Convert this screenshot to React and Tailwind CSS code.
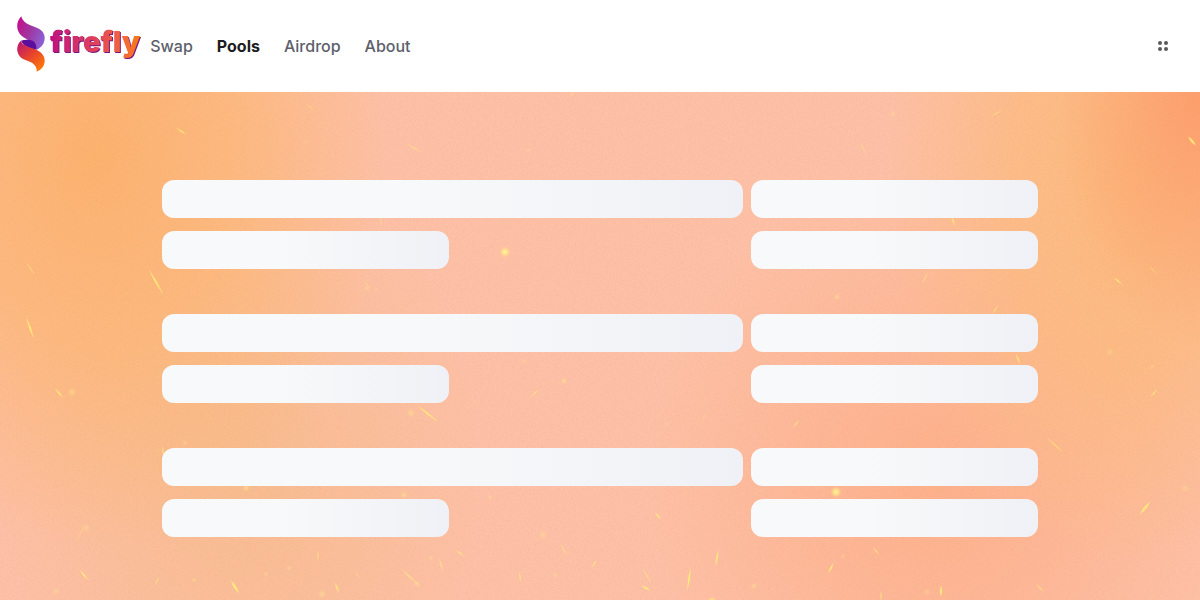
import React from 'react';

const NAV_LINKS = [
    { label: 'Swap', href: '#swap' },
    { label: 'Pools', href: '#pools', active: true },
    { label: 'Airdrop', href: '#airdrop' },
    { label: 'About', href: '#about' },
];

// [x, y, length, thickness, angle, opacity]
const SPARKS = [
    [181, 39, 10, 3, 35, 0.7],
    [310, 15, 9, 2, 40, 0.35],
    [414, 56, 15, 2, 30, 0.55],
    [381, 129, 9, 2, 85, 0.4],
    [863, 56, 12, 2, 62, 0.4],
    [997, 21, 11, 2, -28, 0.5],
    [1192, 49, 10, 4, 50, 0.9],
    [953, 129, 8, 3, 70, 0.8],
    [925, 186, 12, 2, -65, 0.5],
    [995, 218, 9, 2, -60, 0.6],
    [1118, 189, 9, 3, 40, 0.8],
    [1153, 178, 8, 2, 45, 0.4],
    [156, 190, 26, 3, 60, 0.9],
    [31, 177, 13, 2, 55, 0.5],
    [30, 236, 19, 3, 70, 0.95],
    [367, 192, 10, 2, 55, 0.35],
    [59, 301, 10, 3, 50, 0.85],
    [163, 359, 8, 2, 85, 0.7],
    [428, 322, 24, 3, 38, 0.9],
    [535, 301, 9, 2, -45, 0.65],
    [704, 325, 8, 1, -70, 0.4],
    [796, 332, 9, 2, -50, 0.65],
    [1018, 267, 9, 3, 70, 0.8],
    [1154, 301, 9, 2, -45, 0.8],
    [1055, 353, 20, 2, 42, 0.55],
    [1145, 416, 14, 4, -52, 0.9],
    [1152, 275, 6, 2, -45, 0.4],
    [80, 442, 16, 2, -65, 0.3],
    [84, 483, 11, 3, 50, 0.9],
    [157, 489, 7, 2, -60, 0.65],
    [235, 495, 13, 4, 58, 0.95],
    [318, 464, 8, 2, 90, 0.5],
    [337, 496, 9, 3, 70, 0.9],
    [357, 482, 10, 2, 55, 0.35],
    [441, 473, 11, 3, 75, 0.6],
    [410, 485, 20, 3, 42, 0.6],
    [460, 461, 9, 3, 35, 0.65],
    [520, 485, 9, 2, 80, 0.8],
    [564, 458, 13, 3, 55, 0.4],
    [594, 472, 7, 2, -60, 0.75],
    [658, 424, 7, 3, 50, 0.9],
    [689, 487, 21, 3, -82, 1],
    [717, 466, 15, 3, -80, 0.95],
    [647, 484, 15, 2, 58, 0.55],
    [646, 496, 9, 3, 30, 1],
    [876, 459, 9, 2, 45, 0.7],
    [831, 476, 10, 3, -65, 0.95],
    [941, 499, 9, 4, 90, 0.95],
    [881, 504, 7, 2, 90, 0.7],
    [1040, 496, 9, 2, 45, 0.8],
    [712, 507, 6, 3, 0, 0.7],
];

// [x, y, radius, opacity]
const GLOWS = [
    [505, 160, 6, 1],
    [836, 400, 6, 1],
    [837, 205, 4, 0.4],
    [893, 22, 4, 0.25],
    [528, 58, 3, 0.25],
    [306, 50, 3, 0.2],
    [367, 196, 4, 0.25],
    [376, 198, 3, 0.2],
    [72, 300, 5, 0.35],
    [564, 289, 4, 0.4],
    [411, 321, 5, 0.35],
    [667, 332, 3, 0.2],
    [524, 269, 3, 0.25],
    [185, 351, 3, 0.3],
    [246, 396, 4, 0.5],
    [404, 403, 4, 0.4],
    [490, 405, 3, 0.35],
    [543, 443, 5, 0.3],
    [1110, 260, 5, 0.25],
    [1185, 396, 5, 0.25],
    [86, 436, 5, 0.25],
    [56, 499, 5, 0.25],
    [289, 476, 3, 0.35],
    [266, 482, 3, 0.3],
    [194, 488, 3, 0.3],
    [322, 502, 5, 0.35],
    [431, 466, 3, 0.3],
    [417, 492, 4, 0.35],
    [555, 483, 3, 0.3],
    [754, 494, 4, 0.35],
    [927, 500, 4, 0.25],
    [843, 464, 3, 0.25],
    [572, 2, 3, 0.3],
];

function LogoMark() {
    return (
        <svg viewBox="0 0 84 168" className="h-14 w-7 shrink-0" aria-hidden="true">
            <defs>
                <linearGradient id="wing-top" x1="0" y1="0.2" x2="1" y2="0.7">
                    <stop offset="0" stopColor="#c4108a" />
                    <stop offset="0.45" stopColor="#a0359f" />
                    <stop offset="1" stopColor="#8b62d6" />
                </linearGradient>
                <linearGradient id="wing-bottom" x1="0" y1="0" x2="0.8" y2="1">
                    <stop offset="0" stopColor="#b3127c" />
                    <stop offset="0.5" stopColor="#e5402f" />
                    <stop offset="1" stopColor="#ff7a0a" />
                </linearGradient>
            </defs>
            <path d="M13 1C17 17 29 25 52 32C74 39 84 52 83 68C82 82 74 95 58 101C56 88 50 80 40 75C26 68 12 62 5 48C-4 30 2 11 13 1Z" fill="url(#wing-top)" />
            <path d="M12 74C24 70 40 71 48 75C56 80 59 90 58 101C40 97 20 92 12 74Z" fill="#5b0f9c" />
            <path d="M12 74C14 86 32 92 50 98C74 106 84 120 83 136C82 150 74 162 59 167C60 156 56 148 46 141C32 132 14 132 5 116C-4 100 2 82 12 74Z" fill="url(#wing-bottom)" />
        </svg>
    );
}

function Logo() {
    return (
        <a href="#home" className="flex items-center gap-[5px] pb-1 pl-[17px]" aria-label="firefly home">
            <LogoMark />
            <span className="bg-linear-to-r from-[#c00a7e] via-[#e0405a] to-[#fb7a08] bg-clip-text pb-1 text-[29px] leading-9 font-black text-transparent drop-shadow-[1px_1px_0_#7a1580]">
                firefly
            </span>
        </a>
    );
}

function Header() {
    return (
        <header className="flex h-[92px] items-center bg-white pr-8">
            <Logo />
            <nav className="ml-[10px] flex items-center gap-6">
                {NAV_LINKS.map((link) => (
                    <a
                        key={link.label}
                        href={link.href}
                        className={link.active ? 'font-bold text-[#1c1c1e]' : 'font-medium text-[#5d606b]'}
                    >
                        {link.label}
                    </a>
                ))}
            </nav>
            <button type="button" aria-label="Open menu" className="ml-auto">
                <svg viewBox="0 0 10 10" className="size-[10px]" fill="#5a5a5e">
                    <circle cx="2" cy="2" r="2" />
                    <circle cx="8" cy="2" r="2" />
                    <circle cx="2" cy="8" r="2" />
                    <circle cx="8" cy="8" r="2" />
                </svg>
            </button>
        </header>
    );
}

function Embers() {
    return (
        <svg
            viewBox="0 0 1200 508"
            preserveAspectRatio="xMidYMid slice"
            className="absolute inset-0 h-full w-full"
            aria-hidden="true"
        >
            <defs>
                <radialGradient id="glow">
                    <stop offset="0" stopColor="#fff59a" />
                    <stop offset="0.4" stopColor="#ffe98a" stopOpacity="0.8" />
                    <stop offset="1" stopColor="#ffd080" stopOpacity="0" />
                </radialGradient>
                <filter id="grain" x="0" y="0" width="100%" height="100%">
                    <feTurbulence type="fractalNoise" baseFrequency="0.6" numOctaves="2" seed="4" />
                    <feColorMatrix values="0 0 0 0 0.6  0 0 0 0 0.35  0 0 0 0 0.2  1.5 0 0 0 -0.6" />
                </filter>
            </defs>
            <rect width="1200" height="508" filter="url(#grain)" opacity="0.2" />
            {SPARKS.map(([x, y, length, thickness, angle, opacity]) => (
                <path
                    key={`${x}-${y}`}
                    d={`M${-length / 2} 0Q0 ${-thickness / 2} ${length / 2} 0Q0 ${thickness / 2} ${-length / 2} 0Z`}
                    transform={`translate(${x} ${y}) rotate(${angle})`}
                    fill="#fff176"
                    stroke="#ffe680"
                    strokeOpacity="0.5"
                    opacity={opacity}
                />
            ))}
            {GLOWS.map(([x, y, r, opacity]) => (
                <circle key={`${x}-${y}`} cx={x} cy={y} r={r} fill="url(#glow)" opacity={opacity} />
            ))}
        </svg>
    );
}

function Bar({ className = '' }) {
    return (
        <div className={`h-[38px] rounded-xl bg-linear-to-r from-[#f7f9fa] from-40% to-[#eff1f6] ${className}`} />
    );
}

function PoolSkeleton() {
    return (
        <div className="grid grid-cols-3 gap-x-2 gap-y-[13px]">
            <Bar className="col-span-2" />
            <Bar />
            <Bar />
            <Bar className="col-start-3" />
        </div>
    );
}

export default function App() {
    return (
        <div className="flex min-h-screen flex-col font-['Inter','Liberation_Sans',sans-serif] text-base">
            <Header />
            <main className="relative flex-1 overflow-hidden bg-[#fec0a6] bg-[radial-gradient(ellipse_12%_50%_at_100%_0%,#fe9e6c_0%,#fe9e6c00_100%),radial-gradient(ellipse_20%_75%_at_94%_18%,#fdba7c_0%,#fdba7cb0_50%,#fdba7c00_100%),radial-gradient(ellipse_24%_78%_at_8%_12%,#fdb26e_0%,#fdb670b0_50%,#fdb87800_100%),radial-gradient(ellipse_20%_60%_at_20%_74%,#f8bc8e_0%,#f8bc8e00_100%),radial-gradient(ellipse_24%_60%_at_78%_76%,#feb08a_0%,#feb08a00_100%)]">
                <Embers />
                <div className="relative mx-auto flex max-w-[900px] flex-col gap-[45px] px-3 pt-22 pb-15" aria-busy="true">
                    <PoolSkeleton />
                    <PoolSkeleton />
                    <PoolSkeleton />
                </div>
            </main>
        </div>
    );
}
